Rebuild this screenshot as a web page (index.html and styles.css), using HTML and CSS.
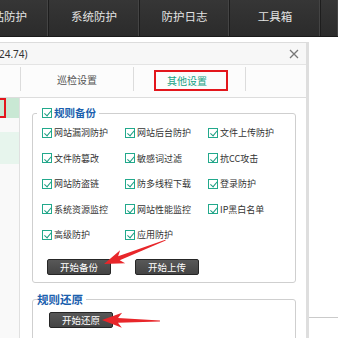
FILE: index.html
```html
<!DOCTYPE html>
<html lang="zh-CN">
<head>
<meta charset="utf-8">
<title>其他设置</title>
<link rel="stylesheet" href="styles.css">
</head>
<body>
<nav class="topbar">
  <div class="nav-item nav-first"><span>网站防护</span></div>
  <div class="nav-item nav-w91">系统防护</div>
  <div class="nav-item nav-w90">防护日志</div>
  <div class="nav-item nav-w91">工具箱</div>
  <div class="nav-item nav-rest"></div>
</nav>
<div class="stage">
  <section class="dialog">
    <header class="titlebar">
      <span class="title">24.74)</span>
      <svg class="close" width="10" height="10" viewBox="0 0 10 10"><path d="M1 1L9 9M9 1L1 9" stroke="#777" stroke-width="1.3" fill="none"/></svg>
    </header>
    <div class="tabs">
      <div class="tab tab-cut"></div>
      <div class="tab tab-a">巡检设置</div>
      <div class="tab tab-b"><span class="tab-active">其他设置</span></div>
      <div class="tab tab-rest"></div>
    </div>
    <div class="body">
      <aside class="side">
        <div class="side-row sel"><span class="side-mark"></span></div>
        <div class="side-row gap"></div>
        <div class="side-row light"></div>
      </aside>
      <main class="pane">
        <fieldset class="group">
          <legend class="legend"><span class="cb"></span>规则备份</legend>
          <div class="checks">
            <label class="check"><span class="cb"></span>网站漏洞防护</label>
            <label class="check"><span class="cb"></span>网站后台防护</label>
            <label class="check"><span class="cb"></span>文件上传防护</label>
            <label class="check"><span class="cb"></span>文件防篡改</label>
            <label class="check"><span class="cb"></span>敏感词过滤</label>
            <label class="check"><span class="cb"></span>抗CC攻击</label>
            <label class="check"><span class="cb"></span>网站防盗链</label>
            <label class="check"><span class="cb"></span>防多线程下载</label>
            <label class="check"><span class="cb"></span>登录防护</label>
            <label class="check"><span class="cb"></span>系统资源监控</label>
            <label class="check"><span class="cb"></span>网站性能监控</label>
            <label class="check"><span class="cb"></span>IP黑白名单</label>
            <label class="check"><span class="cb"></span>高级防护</label>
            <label class="check"><span class="cb"></span>应用防护</label>
          </div>
          <div class="btns">
            <button class="btn">开始备份</button>
            <button class="btn">开始上传</button>
          </div>
        </fieldset>
        <fieldset class="group group2">
          <legend class="legend legend2">规则还原</legend>
          <div class="btns btns2">
            <button class="btn">开始还原</button>
          </div>
        </fieldset>
      </main>
    </div>
  </section>
  <div class="right"><div class="rline"></div></div>
</div>
<svg class="annot" width="338" height="338" viewBox="0 0 338 338">
  <polygon fill="#e8262a" transform="translate(104,264) rotate(-21.2)" points="0,0 20,-7 16,-2.2 66,-0.5 66,0.5 16,2.2 20,7"/>
  <polygon fill="#e8262a" transform="translate(102,320) rotate(1)" points="0,0 20,-7.5 16,-2.4 58,-0.6 58,0.6 16,2.4 20,7.5"/>
</svg>
</body>
</html>
```
FILE: styles.css
```css
* { box-sizing: border-box; margin: 0; padding: 0; }
html, body { width: 338px; height: 338px; overflow: hidden; background: #fff; }
body {
  font-family: "Noto Sans CJK SC", "Noto Sans", sans-serif;
  color: #333;
  position: relative;
}

/* top navigation */
.topbar {
  display: flex;
  height: 37px;
  background: linear-gradient(#363636, #2b2b2b);
  border-bottom: 1px solid #1a1a1a;
}
.nav-item {
  flex: none;
  height: 36px;
  display: flex;
  align-items: center;
  justify-content: center;
  padding-bottom: 4px;
  font-size: 11.5px;
  color: #e2e2e2;
  white-space: nowrap;
  overflow: hidden;
  border-right: 1px solid #1d1d1d;
  box-shadow: inset -2px 0 0 -1px #444;
}
.nav-first { width: 49px; justify-content: flex-end; padding-right: 21px; }
.nav-w91 { width: 91px; }
.nav-w90 { width: 90px; }
.nav-rest { flex: 1; border-right: none; }

/* stage */
.stage { display: flex; align-items: flex-start; height: 301px; }
.dialog {
  flex: none;
  width: 309px;
  height: 301px;
  margin-top: 5px;
  border-top: 1px solid #dcdcdc;
  border-right: 3px solid #dedede;
  display: flex;
  flex-direction: column;
  background: #fff;
}
.titlebar {
  flex: none;
  height: 22px;
  display: flex;
  align-items: center;
  justify-content: space-between;
  padding-right: 7px;
  background: #f7f7f7;
  border-bottom: 1px solid #e4e4e4;
}
.title { font-size: 10px; color: #333; margin-left: -1px; font-family: "Noto Sans", sans-serif; }
.close { display: block; }

.tabs {
  flex: none;
  height: 33px;
  display: flex;
  padding-top: 2px;
  background: #fcfcfc;
  border-bottom: 1px solid #dddddd;
}
.tab {
  flex: none;
  height: 24px;
  display: flex;
  align-items: center;
  justify-content: center;
  font-size: 10px;
  color: #555;
  border-right: 1px solid #dcdcdc;
}
.tab-cut { width: 21px; }
.tab-a { width: 113px; }
.tab-b { width: 112px; justify-content: flex-start; padding-left: 20px; }
.tab-rest { flex: 1; border-right: none; }
.tab-active {
  display: flex;
  align-items: center;
  width: 74px;
  height: 21px;
  margin-top: 3px;
  padding-left: 11px;
  border: 2px solid #e3161c;
  color: #17a386;
}

.body { flex: 1; display: flex; }
.side {
  flex: none;
  width: 20px;
  background: #f9f9f9;
  border-right: 1px solid #e0e0e0;
  position: relative;
}
.side-row.sel { height: 20px; background: #c9e8d4; position: relative; }
.side-row.gap { height: 14px; }
.side-row.light { height: 32px; background: #e7f5ed; }
.side-mark {
  position: absolute;
  left: -10px;
  top: 0;
  width: 16px;
  height: 20px;
  border: 2px solid #e3161c;
}

.pane { flex: 1; padding: 8px 10px 0 12px; }

.group {
  border: 1px solid #cfcfcf;
  border-radius: 3px;
  padding: 0 0 7px 9px;
}
.legend {
  height: 14px;
  line-height: 14px;
  margin-left: -5px;
  padding: 0 3px 0 5px;
  font-size: 10.5px;
  font-weight: 700;
  color: #1b5fae;
  white-space: nowrap;
}
.legend .cb { display: inline-block; vertical-align: -1px; margin-right: 2px; }
.legend2 { font-size: 11.5px; padding: 0 3px 0 0; }

.checks {
  display: grid;
  grid-template-columns: 83px 83px 83px;
  grid-auto-rows: 25.5px;
  align-items: center;
}
.check {
  display: flex;
  align-items: center;
  gap: 2px;
  font-size: 9px;
  color: #333;
  white-space: nowrap;
}
.cb {
  flex: none;
  position: relative;
  width: 10px;
  height: 10px;
  border: 1px solid #22a98c;
  background: #fff;
}
.cb::after {
  content: "";
  position: absolute;
  left: 2.6px;
  top: 0.4px;
  width: 3px;
  height: 5.5px;
  border-right: 1.5px solid #1a9d80;
  border-bottom: 1.5px solid #1a9d80;
  transform: rotate(40deg);
}

.btns { display: flex; gap: 24px; margin-top: 11.5px; padding-left: 5px; }
.btn {
  width: 64px;
  height: 16px;
  font-family: inherit;
  font-size: 9.5px;
  line-height: 14px;
  color: #fff;
  background: linear-gradient(#585858, #444);
  border: 1px solid #262626;
  border-radius: 2px;
}
.group2 { margin-top: 9px; padding-bottom: 30px; }
.btns2 { margin-top: 6px; padding-left: 7px; }

.right { flex: 1; }
.rline { height: 281px; border-bottom: 1px solid #cacaca; }

.annot { position: absolute; left: 0; top: 0; pointer-events: none; }
```
